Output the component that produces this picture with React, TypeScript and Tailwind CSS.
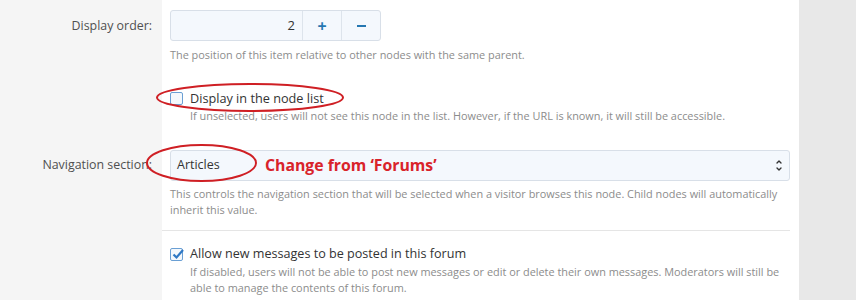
import { ChevronDown, ChevronUp } from "lucide-react";

const hint = "text-[10.9px] leading-[16px] text-[#8c8c8c]";

function Box({ checked }: { checked?: boolean }) {
  return (
    <span className="relative mt-[4px] inline-block w-[13px] h-[13px] shrink-0 rounded-[2px] border border-[#6a9fd4] bg-[#f4f8fc]">
      {checked && (
        <svg className="absolute -left-[1px] -top-[3px]" width="16" height="16" viewBox="0 0 16 16">
          <path d="M3.5 8.5 L6.5 11.5 L13 4" fill="none" stroke="#2f78c4" strokeWidth="2.2" />
        </svg>
      )}
    </span>
  );
}

export default function App() {
  return (
    <div
      className="relative flex w-[856px] h-[300px] overflow-hidden bg-white text-[#141414]"
      style={{ fontFamily: '"Open Sans", "Liberation Sans", sans-serif' }}
    >
      <div className="flex flex-col w-[799px]">
        {/* 显示顺序 */}
        <div className="flex h-[80px]">
          <div className="w-[162px] shrink-0 bg-[#f5f5f5] pt-[16px] pr-[10px] text-right text-[12.4px] leading-[20px] text-[#505050]">
            Display order:
          </div>
          <div className="flex-1 pl-[8px] pr-[9px] pt-[10px]">
            <div className="flex w-[211px] h-[31px] rounded-[3px] border border-[#d8dfe8] bg-[#f4f8fd]">
              <div className="flex-1 pr-[7px] text-right text-[13px] leading-[29px] text-[#333]">2</div>
              <div className="w-[39px] flex items-center justify-center border-l border-[#dde4ec] text-[#2577b1] font-bold text-[16px]">+</div>
              <div className="w-[39px] flex items-center justify-center border-l border-[#dde4ec]">
                <span className="w-[9px] h-[2px] bg-[#2577b1]" />
              </div>
            </div>
            <div className={`mt-[6px] ${hint}`}>The position of this item relative to other nodes with the same parent.</div>
          </div>
        </div>

        {/* 节点列表 */}
        <div className="flex h-[60px]">
          <div className="w-[162px] shrink-0 bg-[#f5f5f5]" />
          <div className="flex-1 pl-[8px] pr-[9px] pt-[8px]">
            <label className="flex gap-[7px] text-[12.7px] leading-[20px] text-[#333]">
              <Box />
              Display in the node list
            </label>
            <div className={`pl-[20px] ${hint}`}>
              If unselected, users will not see this node in the list. However, if the URL is known, it will still be accessible.
            </div>
          </div>
        </div>

        {/* 导航分区 */}
        <div className="flex h-[90px]">
          <div className="w-[162px] shrink-0 bg-[#f5f5f5] pt-[15px] pr-[10px] text-right text-[12.4px] leading-[20px] text-[#505050]">
            Navigation section:
          </div>
          <div className="flex-1 pl-[8px] pr-[9px] pt-[10px]">
            <div className="flex items-center h-[31px] rounded-[3px] border border-[#d8dfe8] bg-[#f4f8fd] pl-[6px] pr-[6px]">
              <span className="w-[88px] text-[12.5px] text-[#333]">Articles</span>
              <span className="flex-1 text-[15.8px] font-bold text-[#d9232a]">Change from ‘Forums’</span>
              <span className="flex flex-col items-center text-[#333]">
                <ChevronUp size={8} strokeWidth={4} className="-mb-[1px]" />
                <ChevronDown size={8} strokeWidth={4} />
              </span>
            </div>
            <div className={`mt-[5px] ${hint}`}>
              This controls the navigation section that will be selected when a visitor browses this node. Child nodes will automatically inherit this value.
            </div>
          </div>
        </div>

        {/* 允许发帖 */}
        <div className="flex flex-1">
          <div className="w-[162px] shrink-0 bg-[#f5f5f5]" />
          <div className="flex-1 mr-[9px] border-t border-[#e5e5e5] pl-[8px] pt-[13px]">
            <label className="flex gap-[7px] text-[12.6px] leading-[20px] text-[#333]">
              <Box checked />
              Allow new messages to be posted in this forum
            </label>
            <div className={`pl-[20px] ${hint}`}>
              If disabled, users will not be able to post new messages or edit or delete their own messages. Moderators will still be able to manage the contents of this forum.
            </div>
          </div>
        </div>
      </div>
      <div className="flex-1 bg-[#e8e8e8]" />

      {/* 红色标注圈 */}
      <svg className="absolute left-0 top-0 pointer-events-none" width="856" height="300">
        <ellipse cx="250" cy="97.5" rx="93" ry="13.5" fill="none" stroke="#cf1f24" strokeWidth="2" />
        <ellipse cx="201.5" cy="163" rx="54.5" ry="18" fill="none" stroke="#cf1f24" strokeWidth="2" />
      </svg>
    </div>
  );
}
